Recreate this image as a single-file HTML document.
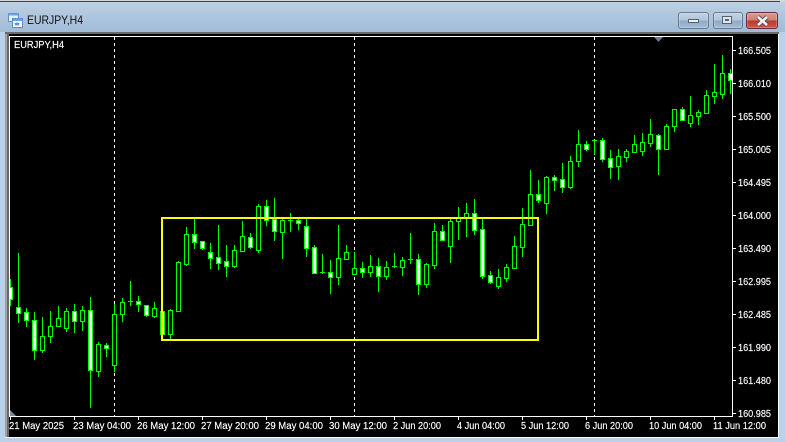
<!DOCTYPE html>
<html><head><meta charset="utf-8"><style>
html,body{margin:0;padding:0;background:#b9d1ea;overflow:hidden}
#w{position:relative;width:785px;height:442px;overflow:hidden;background:#b9d1ea;font-family:"Liberation Sans",sans-serif}
#t{position:absolute;left:0;top:0;width:785px;height:32px;background:linear-gradient(180deg,#c0d3e6 0,#b2c9df 12px,#a2bcd7 32px)}
#t1{position:absolute;left:0;top:0;width:785px;height:1px;background:#d8d8d8}
#t2{position:absolute;left:0;top:1px;width:780px;height:1px;background:#3c4650}
.b{position:absolute;top:12px;height:17px;width:31px;box-sizing:border-box;border:1px solid #66798f;border-radius:3px;background:linear-gradient(180deg,#c2d2e2 0,#b1c6db 48%,#8fa9c6 52%,#a5bed6 100%);box-shadow:inset 0 0 0 1px rgba(255,255,255,.22)}
</style></head><body><div id="w">
<div id="t"></div><div id="t1"></div><div id="t2"></div>
<svg style="position:absolute;left:7px;top:12px" width="16" height="16" viewBox="0 0 16 16" shape-rendering="crispEdges">
<rect x="1.5" y="1.500" width="10" height="8" fill="#e8f2fb" stroke="#5b8fd0"/><rect x="1.500" y="1.500" width="10" height="2" fill="#6ea0dc"/>
<rect x="5.500" y="6.500" width="10" height="9" fill="#f4f9fe" stroke="#5b8fd0"/><rect x="6" y="7" width="9" height="2" fill="#6ea0dc"/>
<path d="M8 11l1 2 1-2 1 2 1-2" fill="none" stroke="#3a6fb5"/></svg>
<div class="b" style="left:678px"><div style="position:absolute;left:9px;top:6px;width:9px;height:2px;background:#eef0f2;border:1px solid #56616e"></div></div>
<div class="b" style="left:713px;width:30px"><div style="position:absolute;left:8px;top:3px;width:8px;height:6px;border:1px solid #56616e;background:#dfe6ee"><div style="position:absolute;left:2px;top:2px;width:4px;height:2px;background:#56616e"></div></div></div>
<div class="b" style="left:746px;width:32px;border-color:#6b2a3a;background:linear-gradient(180deg,#d89a8f 0,#cf8072 48%,#b63a2c 52%,#c65c4e 100%)">
<svg style="position:absolute;left:8px;top:2px" width="15" height="12" viewBox="0 0 15 12"><path d="M3 2l9 8M12 2l-9 8" stroke="#4b4f55" stroke-width="4.400" fill="none"/><path d="M3 2l9 8M12 2l-9 8" stroke="#f1f1f1" stroke-width="2.600" fill="none"/></svg></div>
<div style="position:absolute;left:5px;top:32px;width:774px;height:406px;background:#fff"></div>
<div style="position:absolute;left:5px;top:32px;width:774px;height:405px;background:#a0a0a0"></div>
<div style="position:absolute;left:7px;top:34px;width:772px;height:403px;background:#6a6a6a"></div>
<div style="position:absolute;left:5px;top:32px;width:774px;height:2px;background:#6a6a6a"></div>
<div style="position:absolute;left:9px;top:34px;width:770px;height:403px;background:#000"></div>
<div style="position:absolute;left:778px;top:34px;width:1px;height:404px;background:#fff"></div>
<svg style="position:absolute;left:0;top:0" width="785" height="442" viewBox="0 0 785 442">
<text x="27" y="24" font-size="12" fill="#111" font-family="Liberation Sans,sans-serif" textLength="56" lengthAdjust="spacingAndGlyphs">EURJPY,H4</text>
<clipPath id="c"><rect x="10" y="37" width="722" height="379"/></clipPath>
<g shape-rendering="crispEdges">
<path d="M114.500 37V416M354.500 37V416M594.500 37V416" stroke="#fff" stroke-dasharray="3 3" fill="none"/>
<g clip-path="url(#c)">
<path fill="none" stroke="#0f0" d="M10.500 279V306M18.500 253V323M26.500 308V327M34.500 312V360M42.500 317V353M50.500 311V343M58.500 306V327M66.500 308V332M74.500 304V333M82.500 306V331M90.500 297V408M98.500 342V377M106.500 343V357M114.500 304V372M122.500 298V322M130.500 281V306M138.500 296V312M146.500 305V317M154.500 302V318M162.500 311V334M170.500 309V339M178.500 261V311M186.500 227V266M194.500 219V249M202.500 241V250M210.500 243V269M218.500 225V270M226.500 245V277M234.500 245V268M242.500 221V252M250.500 233V249M258.500 204V253M266.500 200V226M274.500 198V241M282.500 219V259M290.500 213V232M298.500 219V230M306.500 219V257M314.500 245V274M322.500 254V274M330.500 260V294M338.500 225V285M346.500 245V260M354.500 252V275M362.500 262V278M370.500 255V277M378.500 258V292M386.500 261V280M394.500 253V268M402.500 257V276M410.500 233V264M418.500 254V295M426.500 263V288M434.500 223V269M442.500 225V240M450.500 218V263M458.500 207V240M466.500 203V237M474.500 199V235M482.500 218V279M490.500 271V284M498.500 269V289M506.500 264V282M514.500 236V269M522.500 208V257M530.500 170V225M538.500 180V203M546.500 176V214M554.500 175V191M562.500 163V193M570.500 156V189M578.500 130V167M586.500 141V151M594.500 140V155M602.500 138V162M610.500 150V179M618.500 149V180M626.500 149V162M634.500 135V153M642.500 133V156M650.500 119V147M658.500 134V175M666.500 124V150M674.500 109V132M682.500 107V120M690.500 96V127M698.500 110V125M706.500 90V114M714.500 64V104M722.500 55V99M730.500 69V94"/>
<path fill="none" stroke="#0f0" d="M128 301.500h5M288 220.500h5M320 272.500h5M392 266.500h5M408 259.500h5M592 140.500h5"/>
<path fill="#000" stroke="#0f0" d="M40.500 336.500h4v14h-4zM48.500 326.500h4v10h-4zM56.500 318.500h4v8h-4zM64.500 311.500h4v17h-4zM80.500 310.500h4v11h-4zM96.500 344.500h4v27h-4zM112.500 314.500h4v51h-4zM120.500 302.500h4v12h-4zM152.500 308.500h4v8h-4zM168.500 310.500h4v24h-4zM176.500 262.500h4v49h-4zM184.500 234.500h4v30h-4zM232.500 250.500h4v16h-4zM240.500 236.500h4v15h-4zM256.500 206.500h4v44h-4zM280.500 220.500h4v12h-4zM336.500 258.500h4v19h-4zM344.500 252.500h4v7h-4zM352.500 268.500h4v6h-4zM368.500 266.500h4v6h-4zM384.500 267.500h4v9h-4zM400.500 260.500h4v7h-4zM424.500 264.500h4v20h-4zM432.500 231.500h4v34h-4zM448.500 221.500h4v25h-4zM456.500 218.500h4v3h-4zM464.500 213.500h4v5h-4zM496.500 277.500h4v9h-4zM504.500 267.500h4v11h-4zM512.500 246.500h4v22h-4zM520.500 224.500h4v23h-4zM528.500 194.500h4v31h-4zM544.500 177.500h4v26h-4zM568.500 161.500h4v26h-4zM576.500 144.500h4v17h-4zM616.500 156.500h4v10h-4zM624.500 151.500h4v6h-4zM632.500 144.500h4v8h-4zM640.500 142.500h4v9h-4zM648.500 134.500h4v9h-4zM664.500 126.500h4v23h-4zM672.500 109.500h4v17h-4zM688.500 115.500h4v8h-4zM696.500 112.500h4v4h-4zM704.500 95.500h4v18h-4zM712.500 92.500h4v4h-4zM720.500 73.500h4v21h-4z"/>
<path fill="#fff" stroke="#0f0" d="M8.500 287.500h4v12h-4zM16.500 307.500h4v6h-4zM24.500 312.500h4v8h-4zM32.500 320.500h4v30h-4zM72.500 311.500h4v10h-4zM88.500 310.500h4v60h-4zM104.500 345.500h4v3h-4zM136.500 301.500h4v3h-4zM144.500 305.500h4v10h-4zM160.500 311.500h4v23h-4zM192.500 234.500h4v8h-4zM200.500 241.500h4v7h-4zM208.500 252.500h4v6h-4zM216.500 257.500h4v6h-4zM224.500 261.500h4v5h-4zM248.500 237.500h4v10h-4zM264.500 206.500h4v14h-4zM272.500 219.500h4v12h-4zM296.500 220.500h4v3h-4zM304.500 226.500h4v22h-4zM312.500 247.500h4v26h-4zM328.500 272.500h4v5h-4zM360.500 268.500h4v4h-4zM376.500 266.500h4v10h-4zM416.500 259.500h4v25h-4zM440.500 231.500h4v9h-4zM472.500 213.500h4v17h-4zM480.500 229.500h4v47h-4zM488.500 275.500h4v7h-4zM536.500 194.500h4v6h-4zM552.500 177.500h4v3h-4zM560.500 179.500h4v8h-4zM584.500 144.500h4v5h-4zM600.500 140.500h4v19h-4zM608.500 158.500h4v9h-4zM656.500 135.500h4v14h-4zM680.500 109.500h4v11h-4zM728.500 73.500h4v7h-4z"/>
</g>
<rect x="162" y="218" width="376" height="122" fill="none" stroke="#ff0" stroke-width="2"/>
<path d="M9.500 36V416.500H732.500V36.500H9" fill="none" stroke="#fff"/>
<path fill="none" stroke="#fff" d="M733 50.500h3M733 83.500h3M733 116.500h3M733 149.500h3M733 182.500h3M733 215.500h3M733 248.500h3M733 281.500h3M733 314.500h3M733 347.500h3M733 380.500h3M733 413.500h3M10.500 417v3M74.500 417v3M138.500 417v3M202.500 417v3M266.500 417v3M330.500 417v3M394.500 417v3M458.500 417v3M522.500 417v3M586.500 417v3M650.500 417v3M714.500 417v3"/>
</g>
<path d="M654 37h9l-4.500 5z" fill="#6d7b8a"/>
<path d="M10 410l6 6h-6z" fill="#7d8a99"/>
<g fill="#fff" stroke="#fff" stroke-width=".15" font-size="10" font-family="Liberation Sans,sans-serif">
<text x="14" y="48" textLength="50" lengthAdjust="spacingAndGlyphs">EURJPY,H4</text>
<text x="738" y="54" textLength="33" lengthAdjust="spacingAndGlyphs">166.505</text>
<text x="738" y="87" textLength="33" lengthAdjust="spacingAndGlyphs">166.010</text>
<text x="738" y="120" textLength="33" lengthAdjust="spacingAndGlyphs">165.500</text>
<text x="738" y="153" textLength="33" lengthAdjust="spacingAndGlyphs">165.005</text>
<text x="738" y="186" textLength="33" lengthAdjust="spacingAndGlyphs">164.495</text>
<text x="738" y="219" textLength="33" lengthAdjust="spacingAndGlyphs">164.000</text>
<text x="738" y="252" textLength="33" lengthAdjust="spacingAndGlyphs">163.490</text>
<text x="738" y="285" textLength="33" lengthAdjust="spacingAndGlyphs">162.995</text>
<text x="738" y="318" textLength="33" lengthAdjust="spacingAndGlyphs">162.485</text>
<text x="738" y="351" textLength="33" lengthAdjust="spacingAndGlyphs">161.990</text>
<text x="738" y="384" textLength="33" lengthAdjust="spacingAndGlyphs">161.480</text>
<text x="738" y="417" textLength="33" lengthAdjust="spacingAndGlyphs">160.985</text>
<text x="9" y="429" textLength="55" lengthAdjust="spacingAndGlyphs">21 May 2025</text>
<text x="73" y="429" textLength="58" lengthAdjust="spacingAndGlyphs">23 May 04:00</text>
<text x="137" y="429" textLength="58" lengthAdjust="spacingAndGlyphs">26 May 12:00</text>
<text x="201" y="429" textLength="58" lengthAdjust="spacingAndGlyphs">27 May 20:00</text>
<text x="265" y="429" textLength="58" lengthAdjust="spacingAndGlyphs">29 May 04:00</text>
<text x="329" y="429" textLength="58" lengthAdjust="spacingAndGlyphs">30 May 12:00</text>
<text x="393" y="429" textLength="48" lengthAdjust="spacingAndGlyphs">2 Jun 20:00</text>
<text x="457" y="429" textLength="48" lengthAdjust="spacingAndGlyphs">4 Jun 04:00</text>
<text x="521" y="429" textLength="48" lengthAdjust="spacingAndGlyphs">5 Jun 12:00</text>
<text x="585" y="429" textLength="48" lengthAdjust="spacingAndGlyphs">6 Jun 20:00</text>
<text x="649" y="429" textLength="53" lengthAdjust="spacingAndGlyphs">10 Jun 04:00</text>
<text x="713" y="429" textLength="53" lengthAdjust="spacingAndGlyphs">11 Jun 12:00</text>
</g>
</svg>
</div></body></html>
